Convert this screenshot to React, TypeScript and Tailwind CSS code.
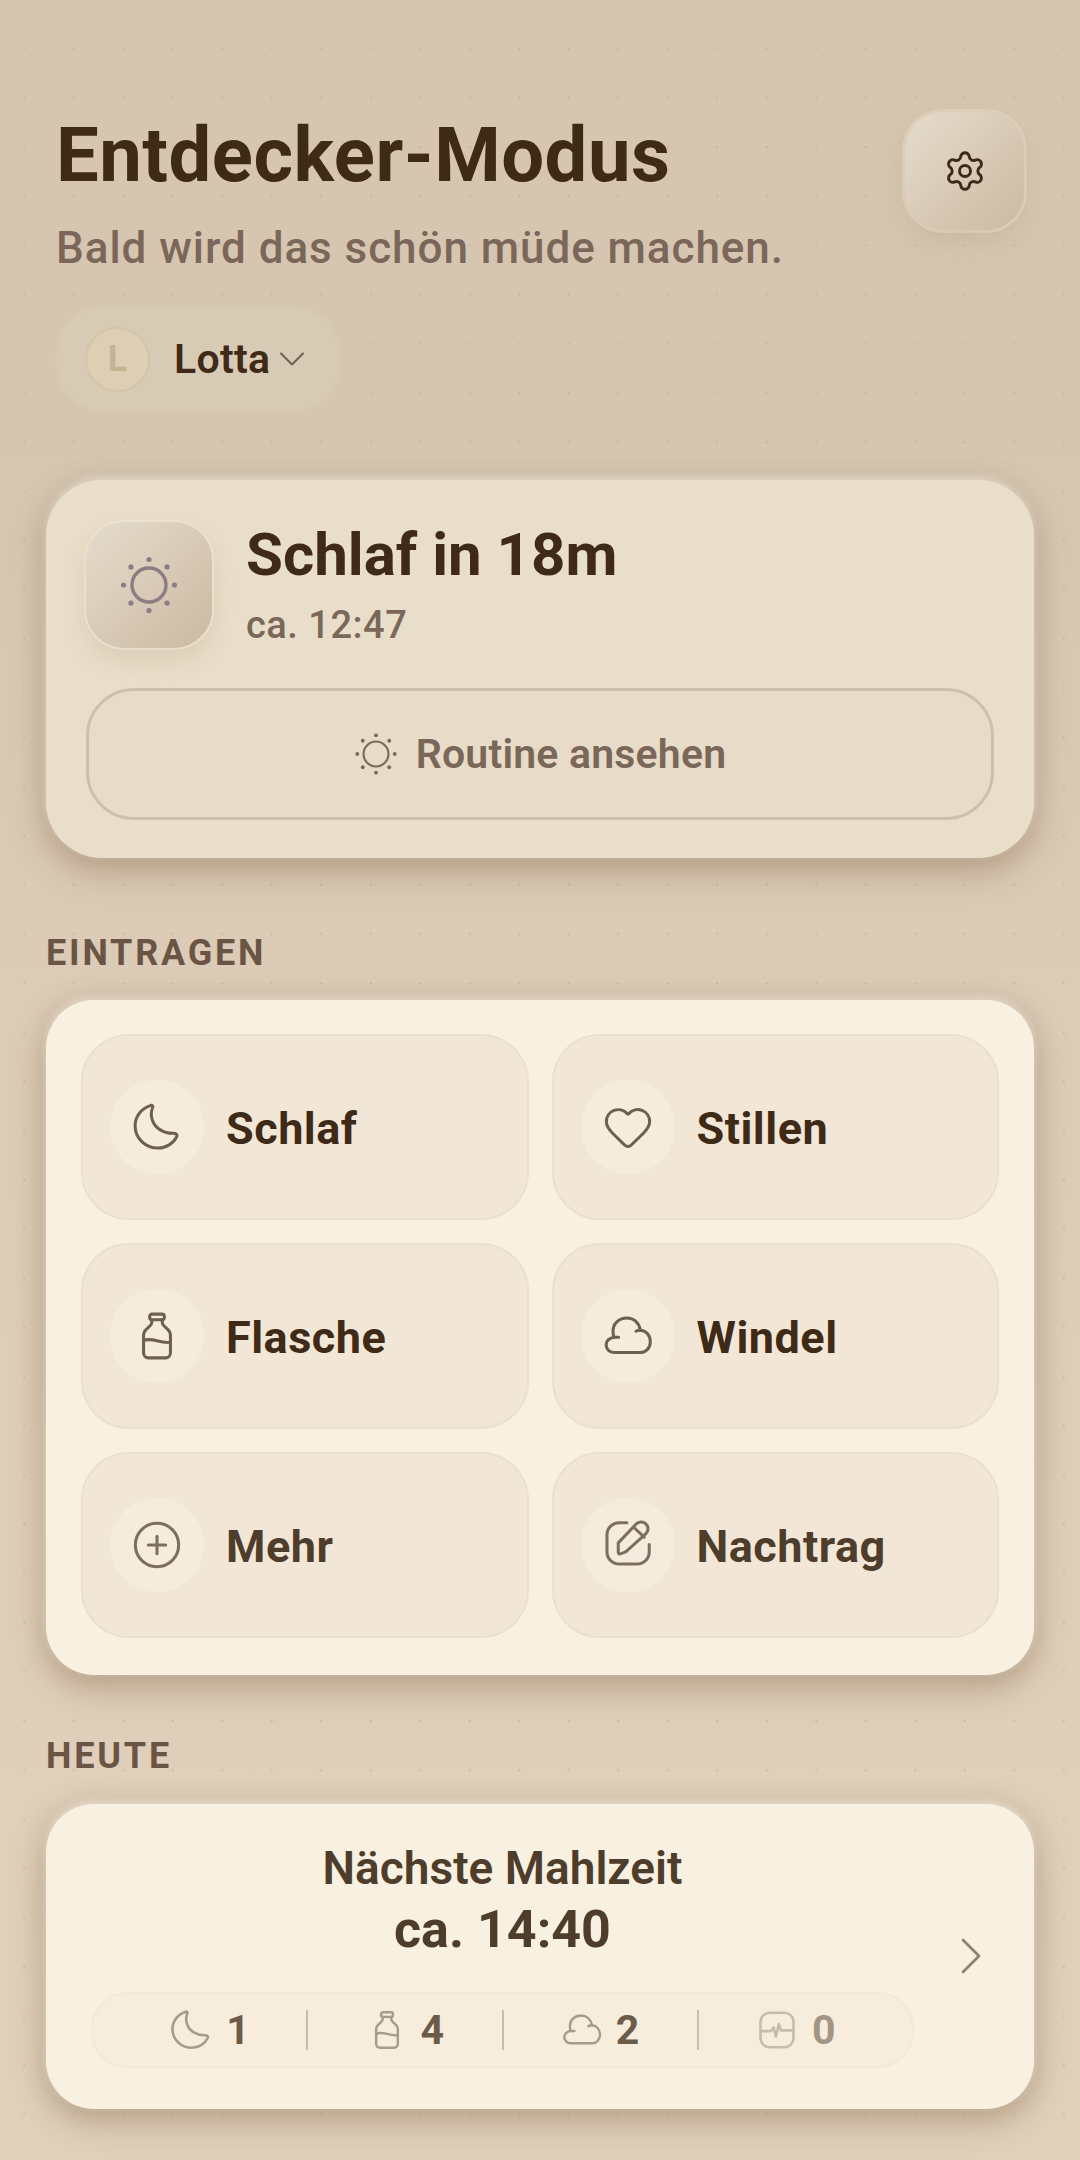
import { ChevronDown, ChevronRight, CirclePlus, Heart, Settings } from 'lucide-react';
import type { ReactNode } from 'react';

type IconProps = { className: string };

// sun with dotted rays, lucide's SunDim has a much smaller disc
function SunDots({ className, stroke }: IconProps & { stroke: number }) {
  const rays = [0, 45, 90, 135, 180, 225, 270, 315];
  return (
    <svg viewBox="0 0 60 60" className={className} fill="none">
      <circle cx="30" cy="30" r="17" stroke="currentColor" strokeWidth={stroke} />
      {rays.map((deg) => (
        <circle
          key={deg}
          cx={30 + 25.5 * Math.cos((deg * Math.PI) / 180)}
          cy={30 + 25.5 * Math.sin((deg * Math.PI) / 180)}
          r="2.6"
          fill="currentColor"
        />
      ))}
    </svg>
  );
}

function Line({ className, children }: IconProps & { children: ReactNode }) {
  return (
    <svg viewBox="0 0 24 24" className={className} fill="none" stroke="currentColor" strokeWidth="1.4" strokeLinecap="round" strokeLinejoin="round">
      {children}
    </svg>
  );
}

function Crescent({ className }: IconProps) {
  return (
    <Line className={className}>
      <path d="M9.2 2C9.9 1.9 10.3 2.4 10 3C9.2 4.8 9.2 7 9.9 9C11.2 12.6 15 15 19.6 14.9C20.6 14.9 21.6 15.4 21.1 16.4C19.6 19.6 16.2 21.7 12.5 21.7C6.6 21.7 1.9 17.2 1.9 11.4C1.9 7.2 4.7 3.4 9.2 2Z" />
    </Line>
  );
}

function Diaper({ className }: IconProps) {
  return (
    <Line className={className}>
      <path d="M7.7 12.6H6C3.6 12.6 1.9 14.2 1.9 16C1.9 18 3.4 19.6 5.4 19.6H18C20.4 19.6 22.3 17.4 22.3 14.6C22.3 11.6 20.2 9.3 17.6 9.3C16.8 9.3 16.2 9.5 15.7 9.8" />
      <path d="M5.4 12.4C5.2 11.6 5.1 10.6 5.1 9.6C5.1 6.2 8 3.7 11.5 3.7C14.6 3.7 17 5.8 17.7 9.3" />
    </Line>
  );
}

function Bottle({ className }: IconProps) {
  return (
    <Line className={className}>
      <rect x="8.6" y="1.9" width="6.8" height="2.6" rx="1.1" />
      <path d="M9.6 4.5V5.6C9.6 6.5 9.2 7 8.4 7.7L7 9C6.2 9.7 5.8 10.4 5.8 11.4V19.9A2.2 2.2 0 0 0 8 22.1H16A2.2 2.2 0 0 0 18.2 19.9V11.4C18.2 10.4 17.8 9.7 17 9L15.6 7.7C14.8 7 14.4 6.5 14.4 5.6V4.5" />
      <path d="M5.8 14C8 13.4 9.8 13.6 12 14.2S16 15.1 18.2 14.9" />
    </Line>
  );
}

function Pen({ className }: IconProps) {
  return (
    <Line className={className}>
      <path d="M11.5 1.7H8A5.6 5.6 0 0 0 2.3 7.3V15.2A5.6 5.6 0 0 0 7.9 20.8H16.2A5.6 5.6 0 0 0 21.8 15.2V11.8" />
      <path d="M7.5 11L15.6 2.5C16.9 1.1 18.9 1 20.2 2.2C21.5 3.4 21.6 5.3 20.4 6.6L11.6 14.6C11.2 15 10.8 15.2 10.3 15.4L8.4 16.1C7.9 16.3 7.5 16 7.5 15.4Z" />
      <path d="M14.6 3.8L19.5 8.4" />
    </Line>
  );
}

function Pulse({ className }: IconProps) {
  return (
    <Line className={className}>
      <rect x="3" y="2.6" width="18" height="18.8" rx="5" />
      <path d="M3 12.6H8.6L10.2 10.6L11.4 15.6L13 8.8L14.2 12.2H21" />
    </Line>
  );
}

function Tile({ icon, label, dim }: { icon: ReactNode; label: string; dim?: boolean }) {
  return (
    <div className="h-[186px] rounded-[48px] bg-[#f2e7d6] border-2 border-[#ecdfcc] flex items-center pl-[27px] gap-[22px]">
      <div className={`w-[94px] h-[94px] rounded-full bg-[#f5ecdd] flex items-center justify-center ${dim ? 'text-[#7d6e61]' : 'text-[#6f5f52]'}`}>{icon}</div>
      <span className={`pt-[3px] text-[45px] leading-[52px] font-bold tracking-[0.5px] ${dim ? 'text-[#4f3d2c]' : 'text-[#3f2a17]'}`}>{label}</span>
    </div>
  );
}

function Stat({ icon, value, faded }: { icon: ReactNode; value: string; faded?: boolean }) {
  return (
    <div className={`flex-1 flex items-center justify-center gap-[13px] ${faded ? 'opacity-60' : ''}`}>
      {icon}
      <span className="text-[41px] leading-[48px] font-bold text-[#6d5b49]">{value}</span>
    </div>
  );
}

const cardShadow =
  'shadow-[0_-3px_8px_rgba(250,245,235,0.55),0_14px_36px_rgba(140,112,80,0.42),0_0_22px_rgba(140,112,80,0.26)]';

export default function App() {
  return (
    <div
      className="min-h-[2160px] overflow-hidden px-[46px] pt-[112px] pb-[52px] font-['Roboto',sans-serif] bg-[radial-gradient(circle,rgba(170,150,125,0.3)_1.3px,transparent_1.6px),linear-gradient(180deg,#d6c6b0_0%,#d6c6b1_20%,#ddccb8_50%,#e1d1bc_100%)] bg-[size:49.5px_49.2px,100%_100%] bg-[position:-0.5px_24px,0_0]"
    >
      <header className="flex items-start justify-between pl-[10px] pr-[10px]">
        <div className="pt-[3px]">
          <h1 className="text-[76px] leading-[80px] font-bold text-[#3f2a17] tracking-[0.5px]">Entdecker-Modus</h1>
          <p className="mt-[27px] text-[44px] leading-[52px] font-medium text-[#7a6759] tracking-[0.95px]">Bald wird das schön müde machen.</p>
        </div>
        <button className="w-[119px] h-[118px] rounded-[38px] bg-gradient-to-br from-[#e6dccd] to-[#cbb9a1] flex items-center justify-center text-[#3f2a17] shadow-[0_0_0_3px_rgba(232,220,200,0.45),0_12px_28px_rgba(160,135,105,0.22)]">
          <Settings size={44} strokeWidth={1.6} />
        </button>
      </header>

      <div className="ml-[9px] mt-[32px] inline-flex items-center h-[106px] rounded-[46px] border-[3px] border-[#d6c8b2] bg-[#d8cbb5] pl-[27px] pr-[24px]">
        <div className="w-[65px] h-[65px] rounded-full bg-[#ddceb4] border-2 border-[#d4c4a8] flex items-center justify-center text-[36px] font-bold text-[#c7b392]">L</div>
        <span className="ml-[24px] text-[41px] leading-[46px] font-semibold text-[#3f2a17] tracking-[0.3px]">Lotta</span>
        <ChevronDown size={44} strokeWidth={1.1} className="text-[#6f5f52]" />
      </div>

      <section className={`mt-[68px] rounded-[56px] bg-[#e9dec9] px-[40px] pt-[42px] pb-[38px] ${cardShadow}`}>
        <div className="flex items-center gap-[34px]">
          <div className="w-[126px] h-[126px] rounded-[38px] bg-gradient-to-br from-[#e6dccd] to-[#cbb9a1] flex items-center justify-center text-[#8e7b84] shadow-[0_0_0_2px_rgba(240,230,215,0.6),0_12px_24px_rgba(165,140,110,0.2)]">
            <SunDots stroke={3.4} className="w-[60px] h-[60px]" />
          </div>
          <div className="-mt-[2px]">
            <div className="text-[60px] leading-[66px] font-bold text-[#3f2a17]">Schlaf in 18m</div>
            <div className="mt-[15px] text-[38px] leading-[44px] font-medium text-[#7a6759] tracking-[0.5px]">ca. 12:47</div>
          </div>
        </div>
        <button className="mt-[40px] w-full h-[132px] rounded-[48px] border-[3px] border-[#cbbfb0] bg-[#e8dcc9] flex items-center justify-center gap-[18px] text-[#7a6759]">
          <SunDots stroke={2.8} className="w-[44px] h-[44px]" />
          <span className="text-[41px] leading-[48px] font-semibold tracking-[0.2px]">Routine ansehen</span>
        </button>
      </section>

      <h2 className="mt-[75px] mb-[27px] text-[36px] leading-[40px] font-bold tracking-[2.8px] text-[#6a5545]">EINTRAGEN</h2>

      <section className={`rounded-[48px] bg-[#f8f0e0] px-[35px] pt-[34px] pb-[37px] ${cardShadow}`}>
        <div className="grid grid-cols-2 gap-x-[23px] gap-y-[23px]">
          <Tile label="Schlaf" icon={<Crescent className="w-[52px] h-[52px]" />} />
          <Tile label="Stillen" icon={<Heart size={52} strokeWidth={1.4} />} />
          <Tile label="Flasche" icon={<Bottle className="w-[52px] h-[52px]" />} />
          <Tile label="Windel" icon={<Diaper className="w-[52px] h-[52px]" />} />
          <Tile dim label="Mehr" icon={<CirclePlus size={52} strokeWidth={1.4} />} />
          <Tile dim label="Nachtrag" icon={<Pen className="w-[52px] h-[52px]" />} />
        </div>
      </section>

      <h2 className="mt-[61px] mb-[28px] text-[36px] leading-[40px] font-bold tracking-[2.8px] text-[#6a5545]">HEUTE</h2>

      <section className={`rounded-[48px] bg-[#f8f0e0] pt-[39px] pb-[41px] pl-[45px] flex items-center ${cardShadow}`}>
        <div className="w-[823px]">
          <div className="text-center text-[46px] leading-[50px] font-semibold text-[#4f3d2c]">Nächste Mahlzeit</div>
          <div className="mt-[8px] text-center text-[52px] leading-[58px] font-bold text-[#4f3d2c]">ca. 14:40</div>
          <div className="mt-[33px] h-[76px] rounded-[36px] border-2 border-[#f3e9d8] bg-[#f6eddd] px-[20px] flex items-center">
            <Stat icon={<Crescent className="w-[44px] h-[44px] text-[#a89b8c]" />} value="1" />
            <div className="w-[2px] h-[40px] bg-[#c9bdac]" />
            <Stat icon={<Bottle className="w-[42px] h-[42px] text-[#a89b8c]" />} value="4" />
            <div className="w-[2px] h-[40px] bg-[#c9bdac]" />
            <Stat icon={<Diaper className="w-[42px] h-[42px] text-[#a89b8c]" />} value="2" />
            <div className="w-[2px] h-[40px] bg-[#c9bdac]" />
            <Stat faded icon={<Pulse className="w-[44px] h-[44px] text-[#a89b8c]" />} value="0" />
          </div>
        </div>
        <ChevronRight size={64} strokeWidth={1} className="ml-[25px] text-[#8f8070]" />
      </section>
    </div>
  );
}
